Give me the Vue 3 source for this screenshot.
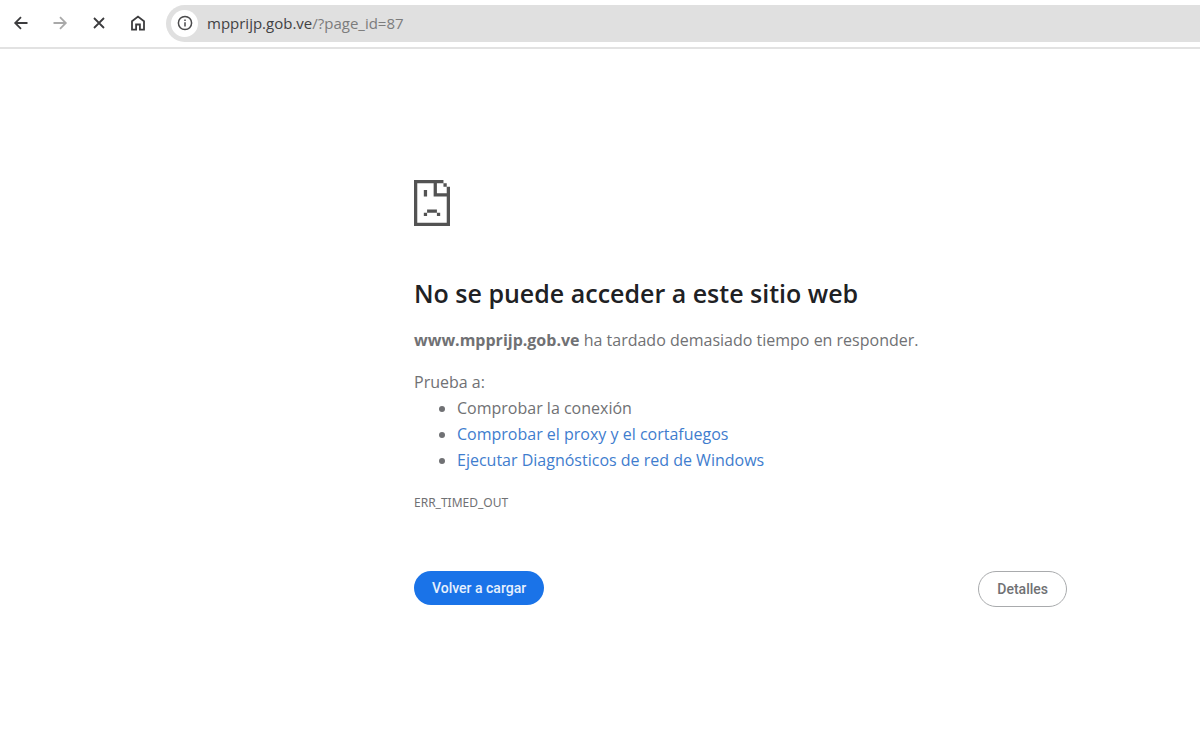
<script setup>
import { ref } from 'vue'

const url = { host: 'mpprijp.gob.ve', path: '/?page_id=87' }
const suggestions = ref([
  { text: 'Comprobar la conexión' },
  { text: 'Comprobar el proxy y el cortafuegos', href: '#proxy' },
  { text: 'Ejecutar Diagnósticos de red de Windows', href: '#diagnosticos' },
])
</script>

<template>
  <div class="browser">
    <header class="toolbar">
      <nav class="nav" aria-label="Navegación">
        <button type="button" class="tool" aria-label="Atrás">
          <svg viewBox="0 0 16 16"><path d="M14.5 8H2.5M8 2.2 2.2 8 8 13.8" /></svg>
        </button>
        <button type="button" class="tool muted" aria-label="Adelante">
          <svg viewBox="0 0 16 16"><path d="M1.5 8h12M8 2.2 13.8 8 8 13.8" /></svg>
        </button>
        <button type="button" class="tool" aria-label="Detener">
          <svg viewBox="0 0 16 16"><path d="m3 3 10 10M13 3 3 13" /></svg>
        </button>
        <button type="button" class="tool" aria-label="Inicio">
          <svg viewBox="0 0 16 16"><path d="M2 14.7V6.2L8 1.6l6 4.6v8.5H9.9V9.5H6.1v5.2z" /></svg>
        </button>
      </nav>
      <div class="omnibox">
        <button type="button" class="info" aria-label="Información del sitio">
          <svg viewBox="0 0 16 16"><circle cx="8" cy="8" r="6.6" /><path d="M8 7.2v4.2M8 4.4v1.7" /></svg>
        </button>
        <a class="url" href="#pagina"><span class="host">{{ url.host }}</span>{{ url.path }}</a>
      </div>
    </header>

    <main class="error">
      <svg class="sad" viewBox="0 0 11 14" aria-hidden="true">
        <path d="M0 0h9v1H7v3h3V2h1v12H0zM1 1v12h9V5H6V1zM9 1h1v1H9zM3 3h1v2H3zM4 9h3v1H4zM3 10h1v1H3zM7 10h1v1H7z" fill-rule="evenodd" />
      </svg>
      <h1>No se puede acceder a este sitio web</h1>
      <p class="summary"><strong>www.mpprijp.gob.ve</strong> ha tardado demasiado tiempo en responder.</p>
      <p class="try">Prueba a:</p>
      <ul>
        <li v-for="s in suggestions" :key="s.text">
          <a v-if="s.href" :href="s.href">{{ s.text }}</a>
          <span v-else>{{ s.text }}</span>
        </li>
      </ul>
      <p class="code">ERR_TIMED_OUT</p>
      <div class="actions">
        <button type="button" class="primary">Volver a cargar</button>
        <button type="button" class="secondary">Detalles</button>
      </div>
    </main>
  </div>
</template>

<style>
body {
  margin: 0;
  background: #fff;
}
</style>

<style scoped>
.browser {
  font-family: "Open Sans", "Noto Sans", sans-serif;
  color: #707174;
}
button {
  font: inherit;
  cursor: pointer;
}
.toolbar {
  display: flex;
  align-items: center;
  gap: 17px;
  height: 46px;
  padding-left: 10px;
  padding-bottom: 1px;
  border-bottom: 2px solid #e2e2e2;
}
.nav {
  display: flex;
  gap: 17px;
}
.tool {
  display: grid;
  place-items: center;
  width: 22px;
  height: 22px;
  padding: 0;
  border: 0;
  background: none;
  color: #3c3c3e;
}
.muted {
  color: #a9a9a9;
}
.tool svg,
.info svg {
  width: 16px;
  height: 16px;
  fill: none;
  stroke: currentColor;
  stroke-width: 1.8;
}
.omnibox {
  flex: 1;
  display: flex;
  align-items: center;
  gap: 9px;
  height: 37px;
  padding-left: 5px;
  border-radius: 19px 0 0 19px;
  background: #e0e0e0;
}
.info {
  display: grid;
  place-items: center;
  width: 27px;
  height: 27px;
  padding: 0;
  border: 0;
  border-radius: 50%;
  background: #fff;
  color: #4a4a4c;
}
.info svg {
  stroke-width: 1.5;
}
.url {
  font-size: 15px;
  line-height: 20px;
  color: #7c7c7c;
  text-decoration: none;
}
.host {
  color: #424244;
}
.error {
  width: min(653px, 100% - 48px);
  margin: 0 auto;
  padding-top: 131px;
  padding-left: 281px;
  box-sizing: content-box;
}
.sad {
  display: block;
  width: 36px;
  height: 46px;
  fill: #535353;
}
h1 {
  margin: 48px 0 0;
  font-size: 25px;
  line-height: 38px;
  font-weight: 600;
  color: #202124;
}
p {
  margin: 0;
}
.summary,
.try,
ul {
  font-size: 16px;
  line-height: 26px;
}
.summary {
  margin-top: 15px;
}
.try {
  margin-top: 16px;
}
ul {
  margin: 0;
  padding-left: 43px;
}
li a {
  color: #3f7dce;
  text-decoration: none;
}
.code {
  margin-top: 20px;
  font-family: "Noto Sans", "Open Sans", sans-serif;
  font-size: 12px;
  line-height: 20px;
}
.actions {
  display: flex;
  justify-content: space-between;
  align-items: flex-start;
  margin-top: 58px;
  font-family: Roboto, "Liberation Sans", sans-serif;
  font-size: 14px;
  font-weight: 500;
}
.primary,
.secondary {
  height: 34px;
  padding: 0 18px;
  border: 0;
  border-radius: 18px;
}
.primary {
  background: #1a73e8;
  color: #e6f0fd;
}
.secondary {
  height: 36px;
  border: 1px solid #a9abad;
  background: #fff;
  color: #707174;
}
</style>
